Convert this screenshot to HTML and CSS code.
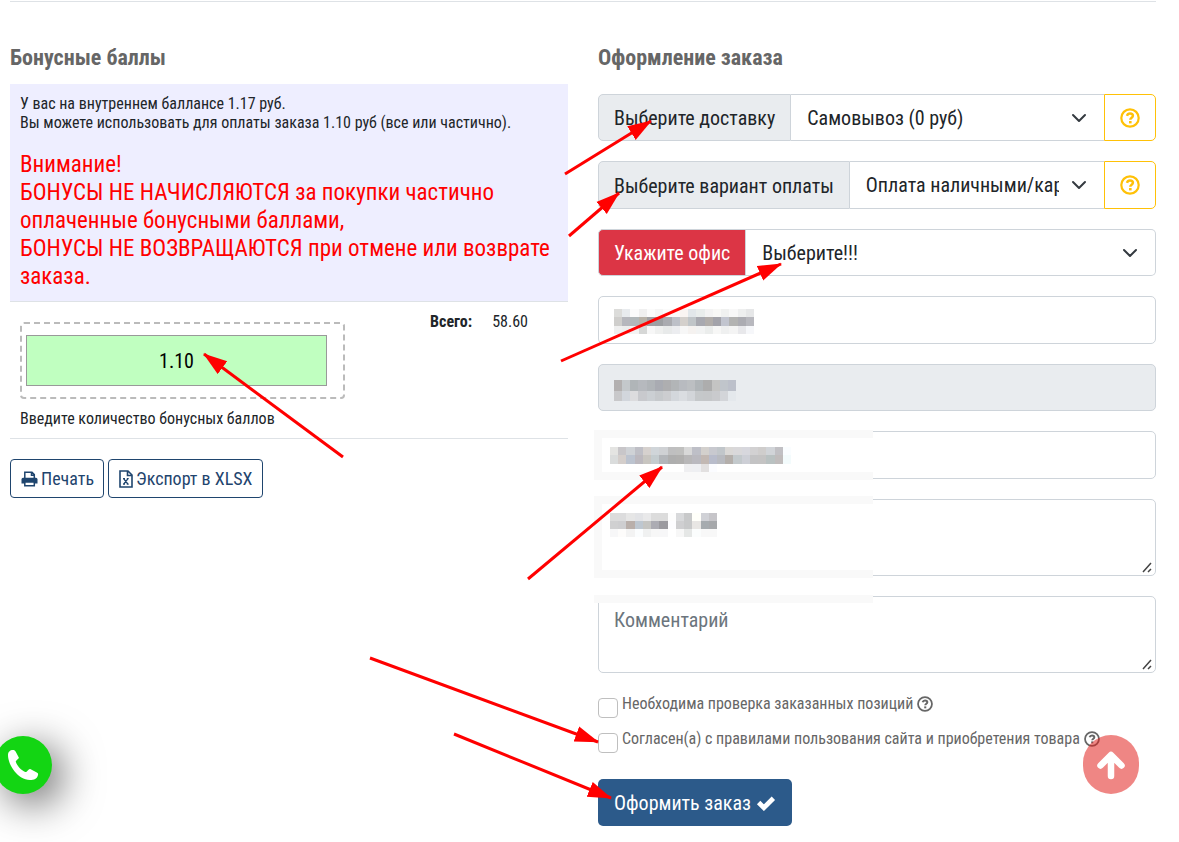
FILE: index.html
```
<!DOCTYPE html>
<html lang="ru">
<head>
    <meta charset="UTF-8">
    <meta name="viewport" content="width=device-width, initial-scale=1.0">
    <title>Оформление заказа</title>
    <link rel="stylesheet" href="styles.css">
</head>
<body>
<svg class="sprite" aria-hidden="true">
    <symbol id="question" viewBox="0 0 20 20">
        <circle cx="10" cy="10" r="8.7" fill="none" stroke="currentColor" stroke-width="2.200"/>
        <path d="M7 7.800C7.500 6.200 8.600 5.500 10 5.500c1.700 0 2.900 1 2.900 2.300 0 1.900-2.600 1.900-2.600 3.900" fill="none" stroke="currentColor" stroke-width="2.500"/>
        <rect x="9" y="13" width="2.600" height="2.400" fill="currentColor"/>
    </symbol>
</svg>

<main class="page">
    <hr class="top-line">
    <div class="columns">
        <section class="bonus">
            <h2>Бонусные баллы</h2>
            <div class="bonus-info">
                <p>У вас на внутреннем баллансе 1.17 руб.<br>Вы можете использовать для оплаты заказа 1.10 руб (все или частично).</p>
                <p class="warning">Внимание!<br>БОНУСЫ НЕ НАЧИСЛЯЮТСЯ за покупки частично<br>оплаченные бонусными баллами,<br>БОНУСЫ НЕ ВОЗВРАЩАЮТСЯ при отмене или возврате заказа.</p>
            </div>
            <div class="bonus-row">
                <div class="bonus-pay">
                    <div class="dashed"><input type="text" id="points" class="points" value="1.10"></div>
                    <label for="points">Введите количество бонусных баллов</label>
                </div>
                <b class="total-name">Всего:</b>
                <span class="total">58.60</span>
            </div>
            <div class="tools">
                <button type="button" class="btn-outline">
                    <svg width="17" height="16" viewBox="0 0 17 16" fill="none" stroke="currentColor" stroke-width="1.500" aria-hidden="true">
                        <path d="M3.800 7V1.300h7.200l2.300 2.300V7M10.500 1.300v3h2.800"/>
                        <path d="M2 6.700h13q1.500 0 1.500 1.800v4H.5v-4Q.5 6.700 2 6.700z" fill="currentColor" stroke="none"/>
                        <path d="M3.800 11h9.500v3.700H3.800z" fill="#fff"/>
                    </svg>
                    Печать
                </button>
                <button type="button" class="btn-outline">
                    <svg width="14" height="18" viewBox="0 0 14 18" fill="none" stroke="currentColor" stroke-width="1.600" aria-hidden="true">
                        <path d="M1 1h8l4 4v12H1zM8.500 1v4.500H13"/>
                        <path d="M4.800 8.800l4 5.200M8.800 8.800l-4 5.200M4 8.600h2M7.800 8.600h1.900M4 14.200h2M7.800 14.200h1.900" stroke-width="1.300"/>
                    </svg>
                    Экспорт в XLSX
                </button>
            </div>
        </section>

        <section class="order">
            <h2>Оформление заказа</h2>
            <form class="order-form">
                <div class="group">
                    <label for="delivery">Выберите доставку</label>
                    <select id="delivery"><option>Самовывоз (0 руб)</option></select>
                    <button type="button" class="help" aria-label="Помощь"><svg width="20" height="20" aria-hidden="true"><use href="#question"/></svg></button>
                </div>
                <div class="group">
                    <label for="payment">Выберите вариант оплаты</label>
                    <select id="payment"><option>Оплата наличными/картой в офисе</option></select>
                    <button type="button" class="help" aria-label="Помощь"><svg width="20" height="20" aria-hidden="true"><use href="#question"/></svg></button>
                </div>
                <div class="group">
                    <label for="office" class="danger">Укажите офис</label>
                    <select id="office" class="last"><option>Выберите!!!</option></select>
                </div>
                <div class="field">
                    <input type="text" class="control" aria-label="Имя">
                    <svg class="mosaic m-name" viewBox="0 0 17 3" data-cells="dcdcda e8ebee fbfbfb f0f0f0 fbfbfb f5f5f5 fbfbfb fbf8f8 faf5f2 e2e7ea e9edec f3f3f3 f8f8f6 f0f1f0 f8f8f8 eeefef e6e7e8|cfcecc b6b7bd b2b8ba b8b2a8 a0a0a4 9d9fa2 aaabb0 bdc0c8 d4d0cc c0c5c8 a8a9b0 b1adaa a3a3aa c2c5cf b3b3b2 acacb2 b8b8be|efefef ededed f3f3f3 d6d7d6 f7f7f7 eff0ef e8eaea ecedf0 f7f7f7 f5f2f0 f2f3f3 ebedec f7f7f6 eff0f0 f4f4f4 e8e8eb f6f7fa"></svg>
                </div>
                <div class="field">
                    <input type="text" class="control" aria-label="Телефон" disabled>
                    <svg class="mosaic m-phone" viewBox="0 0 15 2" data-cells="b3b0b0 c4c8cb b0b5b8 b6b9be b0b4b8 a9abb2 aeaeb0 b2b5b7 b8bbc0 bcbfc2 b0b5b8 adadad c4c4c3 c0c5cb bcc0ca|c8c8ca d2d6dc dcdcde c8c9cd cbcfd3 c6c9cc cccdd0 d3d7dc dadde1 d2d5d9 c5c8ca c5c7c9 c9cacd d3d5d9 e4e8ec"></svg>
                </div>
                <div class="field">
                    <input type="text" class="control" aria-label="E-mail">
                    <div class="veil"></div>
                    <svg class="mosaic m-mail" viewBox="0 0 22 3" data-cells="e4e4e2 c8c6c9 cfd2d6 bfbfc6 d6d1ce d0d5d9 cfd1d4 bfbfc0 c0c0bf d8d8d8 bebfc7 d3d0cd c8c9cf c1c6ca dad8d6 d9d8da d7d7dd d2d1d2 cfcdcc d1d4d8 c1c0c4 fafdff|dadcdc d4cecb bcc3cf bcb8be c8c5c0 c4cccf b3b6ba aeaeae b0afae b8b7b8 bab9bf c2b8b3 b8bccb b8bac0 b4afab c3c9cc cdcfd6 c3c3c4 c4c3c3 b9c1c1 c0bcbc f3fbfc|ffffff ffffff ffffff ffffff ffffff ffffff ffffff ffffff ffffff efeff1 eeeff2 e2e0e0 fbfcff"></svg>
                </div>
                <div class="field area">
                    <textarea class="control" aria-label="Адрес"></textarea>
                    <div class="veil veil-area"></div>
                    <svg class="mosaic m-address" viewBox="0 0 13 3" data-cells="dcdcdc dcdcdd e6e6e6 e2e3e6 e9e9ea dcdcdc dcdcdc fdfdfd d8d9db c8c9ca fffffa d0d1d6 c6c5c9|d0d0d1 ceced0 b9afaa bec7d0 c5c5c2 acacb3 9b9a9f fdfdff cfcfd1 c8c9ca e8e6e4 a6abaf a6a8ab|f7f7f8 fdfcfb f3f3f3 fbfdfe f0f1f1 f7f7f7 f7f7f8 ffffff f7f7f7 e5e7e6 fbfdfd f8f8f8 f8f8f8"></svg>
                </div>
                <div class="field area">
                    <textarea class="control" aria-label="Комментарий" placeholder="Комментарий"></textarea>
                    <div class="veil veil-strip"></div>
                </div>
                <div class="checks">
                    <div class="check">
                        <input type="checkbox" id="verify">
                        <label for="verify">Необходима проверка заказанных позиций</label>
                        <svg width="16" height="16" aria-hidden="true"><use href="#question"/></svg>
                    </div>
                    <div class="check">
                        <input type="checkbox" id="agree">
                        <label for="agree">Согласен(а) с правилами пользования сайта и приобретения товара</label>
                        <svg width="16" height="16" aria-hidden="true"><use href="#question"/></svg>
                    </div>
                </div>
                <button type="submit" class="submit">
                    Оформить заказ
                    <svg width="20" height="16" viewBox="0 0 19 15" aria-hidden="true"><path d="M2.500 7l5 5L16.500 3" fill="none" stroke="#fff" stroke-width="4.500"/></svg>
                </button>
            </form>
        </section>
    </div>
</main>

<button type="button" class="call" aria-label="Позвонить">
    <svg width="32" height="32" viewBox="0 0 32 32" aria-hidden="true"><path d="M1 6c0-3 2-5 5-5 1.500 0 2 .5 2.600 1.600l3.200 5.800c.5 1-3.300 3-3 4.300 1.500 4.500 5.500 8.500 9.500 10.300 1.600.6 3.400-3.700 4.900-3l6.600 3.500c1.200.6 1.500 1.200 1.200 2.500-.8 4-4 5-8 5C11 31 1 16 1 6z" fill="#fff"/></svg>
</button>
<button type="button" class="to-top" aria-label="Наверх">
    <svg width="30" height="30" viewBox="0 0 30 30" aria-hidden="true"><path d="M15 26V6M4.500 15.500L15 5l10.500 10.500" fill="none" stroke="#fff" stroke-width="6.500" stroke-linejoin="round" stroke-linecap="round"/></svg>
</button>

<svg class="arrows" width="1179" height="842" viewBox="0 0 1179 842" aria-hidden="true">
    <marker id="head" markerUnits="userSpaceOnUse" markerWidth="24" markerHeight="18" refX="23" refY="9" orient="auto"><path d="M0 1l24 8-24 8z" fill="red"/></marker>
    <g stroke="red" stroke-width="3">
        <path d="M565 174L651 121" marker-end="url(#head)"/>
        <path d="M569 236L619 193" marker-end="url(#head)"/>
        <path d="M561 361L781 264" marker-end="url(#head)"/>
        <path d="M528 579L662 467" marker-end="url(#head)"/>
        <path d="M343 457L204 354" marker-end="url(#head)"/>
        <path d="M370 658L598 742" marker-end="url(#head)"/>
        <path d="M454 734L611 798" marker-end="url(#head)"/>
    </g>
</svg>

<script>
// fill the mosaics, one square per colour
document.querySelectorAll('.mosaic').forEach(function(svg){
    let cells = '';
    svg.dataset.cells.split('|').forEach(function(row, y){
        row.split(' ').forEach(function(color, x){
            cells += `<rect x="${x}" y="${y}" width="1" height="1" fill="#${color}"/>`;
        });
    });
    svg.setAttribute('preserveAspectRatio', 'none');
    svg.innerHTML = cells;
});
</script>
</body>
</html>
```
FILE: styles.css
```
*{
    box-sizing: border-box;
}
body{
    margin: 0;
    position: relative;
    overflow-x: hidden;
    background-color: #fff;
    color: #212529;
    font-family: 'Roboto Condensed', 'Liberation Sans Narrow', Roboto, sans-serif;
    font-size: 16px;
    line-height: 19px;
}
button, input, select, textarea{
    font-family: inherit;
    font-size: 20px;
    color: #212529;
}
p{
    margin: 0;
}
.sprite{
    position: absolute;
    width: 0;
    height: 0;
}
.page{
    padding: 1px 23px 16px 10px;
}
.top-line{
    margin: 0;
    border: 0;
    border-top: 1px solid #dee2e6;
}
.columns{
    display: grid;
    grid-template-columns: 1fr 1fr;
    gap: 30px;
    padding-top: 42px;
}
.columns section{
    min-width: 0;
}
h2{
    margin: 0;
    color: #666;
    font-size: 22px;
    line-height: 28px;
}

/* bonus points */
.bonus-info{
    margin-top: 12px;
    padding: 10px;
    background-color: #eef;
    border-bottom: 1px solid #dee2e6;
}
.warning{
    margin-top: 19px;
    color: red;
    font-size: 23px;
    line-height: 28px;
}
.bonus-row{
    display: flex;
    gap: 20px;
    padding: 10px 40px 10px 10px;
    border-bottom: 1px solid #dee2e6;
}
.bonus-pay{
    width: 325px;
    margin-top: 10px;
}
.dashed{
    margin-bottom: 10px;
    padding: 11px 16px 11px 4px;
    border: 2px dashed #bbb;
    border-radius: 4px;
}
.points{
    display: block;
    width: 100%;
    height: 51px;
    background-color: #c0ffc0;
    border: 1px solid #999;
    color: #000;
    text-align: center;
}
.total-name{
    margin-left: auto;
}
.tools{
    display: flex;
    gap: 4px;
    margin-top: 20px;
}
.btn-outline{
    display: flex;
    align-items: center;
    gap: 3px;
    height: 39px;
    padding: 0 9px 0 10px;
    background-color: #fff;
    border: 1px solid #1f456e;
    border-radius: 4px;
    color: #1f456e;
    font-size: 18px;
}

/* order form */
.order-form{
    display: flex;
    flex-direction: column;
    gap: 20px;
    margin-top: 22px;
}
.group, .field{
    height: 47px;
}
.group:nth-child(even), .field:nth-child(even){
    height: 48px;
}
.order-form .area{
    height: 77px;
}
.group{
    display: flex;
}
.group label{
    display: flex;
    align-items: center;
    flex: none;
    padding: 2px 15px 0;
    background-color: #e9ecef;
    border: 1px solid #ced4da;
    border-radius: 5px 0 0 5px;
    font-size: 20px;
}
.group .danger{
    background-color: #dc3545;
    color: #fff;
}
.group select{
    flex: 1;
    min-width: 0;
    padding: 0 45px 0 16px;
    appearance: none;
    background: #fff url("data:image/svg+xml,%3csvg xmlns='http://www.w3.org/2000/svg' viewBox='0 0 16 16'%3e%3cpath fill='none' stroke='%23343a40' stroke-linecap='round' stroke-linejoin='round' stroke-width='2' d='M2 5l6 6 6-6'/%3e%3c/svg%3e") no-repeat right 17px center / 16px 16px;
    border: 1px solid #ced4da;
    border-left: 0;
    border-right: 0;
    border-radius: 0;
}
.group .last{
    border-right: 1px solid #ced4da;
    border-radius: 0 5px 5px 0;
}
.help{
    display: flex;
    align-items: center;
    justify-content: center;
    width: 52px;
    padding: 0;
    background-color: #fff;
    border: 1px solid #ffc107;
    border-radius: 0 5px 5px 0;
    color: #ffc107;
}
.field{
    position: relative;
}
.control{
    display: block;
    width: 100%;
    height: 100%;
    padding: 8px 15px;
    background-color: #fff;
    border: 1px solid #ced4da;
    border-radius: 5px;
    line-height: 30px;
}
.control:disabled{
    background-color: #e9ecef;
}
.control::placeholder{
    color: #6c757d;
}
.control::-webkit-resizer{
    background: url("data:image/svg+xml,%3csvg xmlns='http://www.w3.org/2000/svg' viewBox='0 0 15 15'%3e%3cpath fill='none' stroke='%23444' stroke-width='1.5' d='M3 12l8-9M8 12l3-3'/%3e%3c/svg%3e") no-repeat center / 15px 15px;
}
.veil{
    position: absolute;
    left: -4px;
    top: -1px;
    width: 279px;
    height: 50px;
    background-color: #fff;
    border: 8px solid #f9f9f9;
    border-right: 0;
}
.veil-area{
    top: -3px;
    height: 82px;
}
.veil-strip{
    height: 8px;
    border: 0;
    background-color: #f9f9f9;
}
.mosaic{
    position: absolute;
    shape-rendering: crispEdges;
}
.m-name{
    left: 16px;
    top: 13px;
    width: 140px;
    height: 25px;
}
.m-phone{
    left: 16px;
    top: 16px;
    width: 122px;
    height: 21px;
}
.m-mail{
    left: 12px;
    top: 16px;
    width: 181px;
    height: 25px;
}
.m-address{
    left: 12px;
    top: 14px;
    width: 107px;
    height: 24px;
}
.checks{
    display: flex;
    flex-direction: column;
    gap: 11px;
    margin-top: 1px;
    color: #666;
}
.check{
    display: flex;
    gap: 4px;
    height: 24px;
}
.check input{
    appearance: none;
    width: 20px;
    height: 20px;
    margin: 4px 0 0;
    background-color: #fff;
    border: 1px solid #bfbfbf;
    border-radius: 4px;
}
.check svg{
    margin-top: 2px;
}
.submit{
    display: flex;
    align-items: center;
    align-self: flex-start;
    gap: 5px;
    height: 47px;
    margin-top: 6px;
    padding: 0 16px;
    background-color: #2c5a8a;
    border: 0;
    border-radius: 5px;
    color: #fff;
}

/* floating buttons */
.call, .to-top{
    position: fixed;
    display: flex;
    align-items: center;
    justify-content: center;
    padding: 0;
    border: 0;
}
.call{
    left: -6px;
    bottom: 48px;
    width: 58px;
    height: 58px;
    background-color: #13d513;
    border-radius: 50%;
    box-shadow: 10px 10px 40px rgba(0, 0, 0, .6);
}
.to-top{
    right: 40px;
    bottom: 48px;
    width: 56px;
    height: 59px;
    background-color: rgba(226, 32, 28, .54);
    border-radius: 28px;
}
.arrows{
    position: absolute;
    left: 0;
    top: 0;
    pointer-events: none;
}
```
